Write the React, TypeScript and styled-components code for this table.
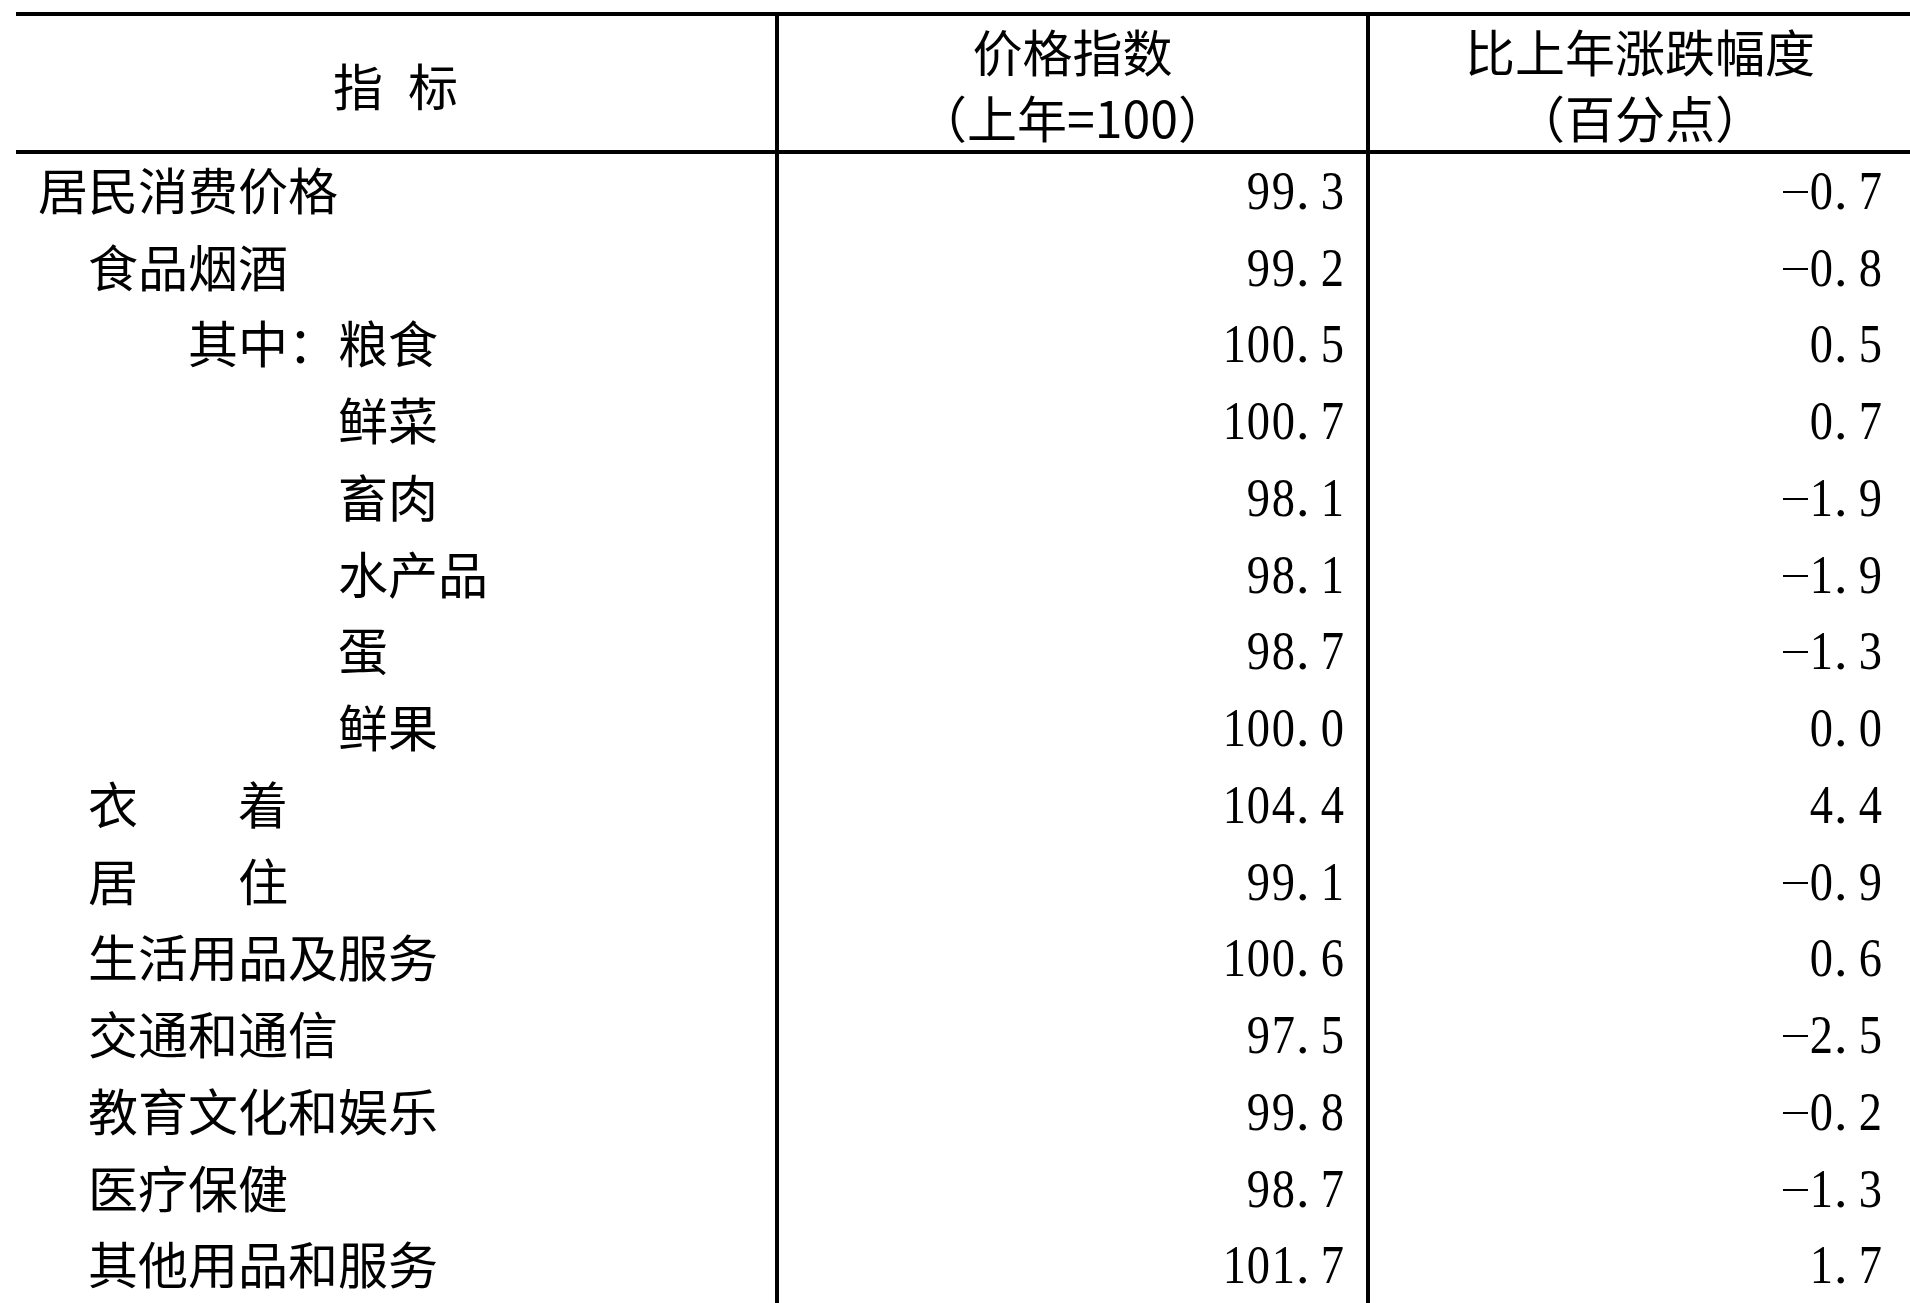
import React from 'react';
import styled, { createGlobalStyle } from 'styled-components';

const GlobalStyle = createGlobalStyle`
  html, body {
    margin: 0;
    padding: 0;
    background: #ffffff;
    overflow: hidden;
  }
  body {
    font-family: "Noto Sans CJK SC", "Noto Sans", sans-serif;
    color: #000;
  }
`;

type Item = {
  label: string;
  indent: number;
  index: string;
  change: string;
};

const items: Item[] = [
  { label: '居民消费价格', indent: 0, index: '99.3', change: '-0.7' },
  { label: '食品烟酒', indent: 1, index: '99.2', change: '-0.8' },
  { label: '其中：粮食', indent: 3, index: '100.5', change: '0.5' },
  { label: '鲜菜', indent: 6, index: '100.7', change: '0.7' },
  { label: '畜肉', indent: 6, index: '98.1', change: '-1.9' },
  { label: '水产品', indent: 6, index: '98.1', change: '-1.9' },
  { label: '蛋', indent: 6, index: '98.7', change: '-1.3' },
  { label: '鲜果', indent: 6, index: '100.0', change: '0.0' },
  { label: '衣　　着', indent: 1, index: '104.4', change: '4.4' },
  { label: '居　　住', indent: 1, index: '99.1', change: '-0.9' },
  { label: '生活用品及服务', indent: 1, index: '100.6', change: '0.6' },
  { label: '交通和通信', indent: 1, index: '97.5', change: '-2.5' },
  { label: '教育文化和娱乐', indent: 1, index: '99.8', change: '-0.2' },
  { label: '医疗保健', indent: 1, index: '98.7', change: '-1.3' },
  { label: '其他用品和服务', indent: 1, index: '101.7', change: '1.7' },
];

function App() {
  return (
    <>
      <GlobalStyle />
      <Table>
        <HeaderRow>
          <HeadCell>
            <HeadTitle>{'指\u2002标'}</HeadTitle>
          </HeadCell>
          <HeadCell $divider>
            <HeadLine>价格指数</HeadLine>
            <HeadLine>（上年=100）</HeadLine>
          </HeadCell>
          <HeadCell $divider>
            <HeadLine>比上年涨跌幅度</HeadLine>
            <HeadLine>（百分点）</HeadLine>
          </HeadCell>
        </HeaderRow>
        {items.map((item) => (
          <Row key={item.label}>
            <LabelCell>
              <Label $indent={item.indent}>{item.label}</Label>
            </LabelCell>
            <NumCell $divider $pad={23}>
              <Num value={item.index} />
            </NumCell>
            <NumCell $divider $pad={29}>
              <Num value={item.change} />
            </NumCell>
          </Row>
        ))}
      </Table>
    </>
  );
}

// 宋体风格的半角等宽数字
function Num({ value }: { value: string }) {
  return (
    <NumText>
      {value.split('').map((ch, i) =>
        ch === '.' ? (
          <Dot key={i}>.</Dot>
        ) : ch === '-' ? (
          <Minus key={i} />
        ) : (
          <Digit key={i}>{ch}</Digit>
        )
      )}
    </NumText>
  );
}

export default App;

const Table = styled.div`
  margin: 12px 0 0 16px;
  border-top: 4px solid #000;
  display: flex;
  flex-direction: column;
`;

const columns = '759px 591px 1fr';

const HeaderRow = styled.div`
  display: grid;
  grid-template-columns: ${columns};
  height: 134px;
  border-bottom: 4px solid #000;
`;

const HeadCell = styled.div<{ $divider?: boolean }>`
  box-sizing: border-box;
  display: flex;
  flex-direction: column;
  align-items: center;
  justify-content: center;
  border-left: ${(p) => (p.$divider ? '4px solid #000' : 'none')};
  font-family: "Noto Sans CJK SC", "Noto Sans", sans-serif;
  font-size: 50px;
`;

const HeadTitle = styled.div`
  line-height: 1;
  padding-top: 2px;
  white-space: pre;
`;

const HeadLine = styled.div`
  line-height: 66px;
  white-space: nowrap;
`;

const Row = styled.div`
  display: grid;
  grid-template-columns: ${columns};
  height: 76.75px;
`;

const LabelCell = styled.div`
  display: flex;
  align-items: center;
  padding-left: 22px;
`;

const Label = styled.span<{ $indent: number }>`
  font-family: "Noto Sans CJK SC", "Noto Sans", sans-serif;
  font-size: 50px;
  line-height: 1;
  padding-left: ${(p) => p.$indent}em;
  margin-top: -9px;
  white-space: pre;
`;

const NumCell = styled.div<{ $divider?: boolean; $pad: number }>`
  box-sizing: border-box;
  display: flex;
  align-items: center;
  justify-content: flex-end;
  padding-right: ${(p) => p.$pad}px;
  border-left: ${(p) => (p.$divider ? '4px solid #000' : 'none')};
`;

const NumText = styled.span`
  font-family: "Liberation Serif", "Times New Roman", serif;
  font-size: 54px;
  line-height: 1;
  display: inline-flex;
  align-items: center;
  margin-top: -3px;
`;

const Digit = styled.span`
  display: inline-block;
  width: 24.5px;
  text-align: center;
  transform: scaleX(0.86);
`;

const Dot = styled.span`
  display: inline-block;
  width: 24.5px;
  text-align: left;
  padding-left: 2px;
  box-sizing: border-box;
`;

const Minus = styled.span`
  display: inline-block;
  width: 24.5px;
  height: 2px;
  background: #000;
  margin-top: 2px;
`;
